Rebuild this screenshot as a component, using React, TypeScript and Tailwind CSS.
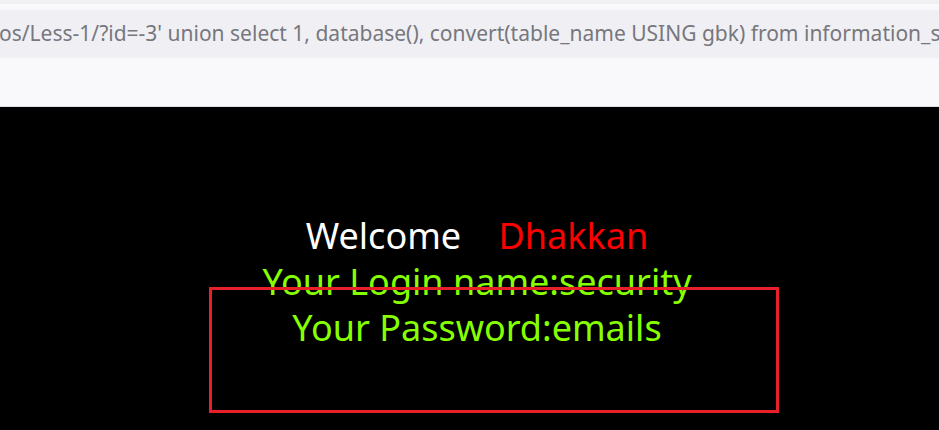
export default function App() {
  return (
    <div className="relative w-[939px] h-[430px] overflow-hidden bg-black" style={{ fontFamily: '"Noto Sans", "Open Sans", sans-serif' }}>
      {/* browser chrome */}
      <div className="h-[107px] bg-[#f9f9fb] border-b border-[#e0e0e4] flex flex-col">
        <div className="h-[4px] bg-[#f0f0f0]" />
        <div className="mt-[6px] h-[48px] bg-[#f0f0f4] flex items-center overflow-hidden">
          <span className="whitespace-nowrap text-[21px] text-[#77777d] -ml-[1px]">
            os/Less-1/?id=-3' union select 1, database(), convert(table_name USING gbk) from information_schema.tables
          </span>
        </div>
      </div>

      {/* page */}
      <div className="pl-[15px] pt-[106px] text-center leading-[46px]">
        <div className="text-[36px] text-white">
          Welcome&nbsp;&nbsp;&nbsp;&nbsp;<span className="text-[#ff0000]">Dhakkan</span>
        </div>
        <div className="text-[36px] text-[#86ff00]">Your Login name:security</div>
        <div className="text-[36px] text-[#86ff00]">Your Password:emails</div>
      </div>

      {/* annotation box */}
      <div className="absolute left-[209px] top-[287px] w-[570px] h-[126px] border-[3px] border-[#e8202a]" />
    </div>
  );
}
